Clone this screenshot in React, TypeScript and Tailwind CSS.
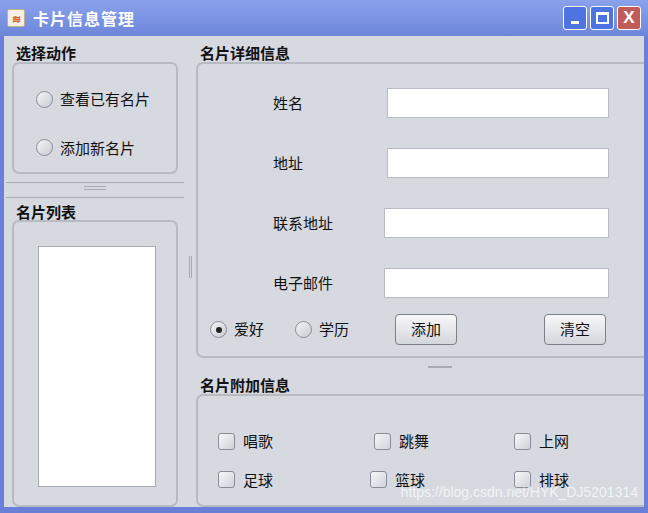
import React from "react";

const font = { fontFamily: '"SimSun","Noto Sans CJK SC",sans-serif' };

function Radio({ on, label }: { on?: boolean; label: string }) {
  return (
    <div className="flex items-center gap-[7px]">
      <span className="w-[17px] h-[17px] rounded-full border border-[#8a8d99] bg-gradient-to-br from-[#f4f4f6] to-[#c9ccd4] flex items-center justify-center">
        {on && <span className="w-[6px] h-[6px] rounded-full bg-[#222]" />}
      </span>
      <span>{label}</span>
    </div>
  );
}

function Check({ label }: { label: string }) {
  return (
    <div className="flex items-center gap-[8px]">
      <span className="w-[17px] h-[17px] rounded-[3px] border border-[#8a8d99] bg-gradient-to-br from-[#f7f7f9] to-[#d0d2da]" />
      <span>{label}</span>
    </div>
  );
}

function Field({ label, x }: { label: string; x: number }) {
  return (
    <div className="flex items-center h-[30px]">
      <span
        className="pl-[75px] shrink-0 whitespace-nowrap"
        style={{ width: x ? 186 : 189 }}
      >
        {label}
      </span>
      <div
        className="h-[30px] bg-white border border-[#b9bcc4]"
        style={{ width: x ? 225 : 222 }}
      />
    </div>
  );
}

function Btn({ label }: { label: string }) {
  return (
    <div className="w-[62px] h-[31px] rounded-[4px] border border-[#7d808a] bg-gradient-to-b from-[#f8f8fa] to-[#d4d6dd] flex items-center justify-center">
      {label}
    </div>
  );
}

export default function App() {
  return (
    <div
      className="w-[648px] h-[513px] bg-[#6a7fd8] flex flex-col text-[15px] text-[#111] overflow-hidden"
      style={font}
    >
      <div className="h-[36px] bg-gradient-to-b from-[#8aa2ec] to-[#6e86da] flex items-center px-[7px]">
        <div className="w-[18px] h-[18px] rounded-[2px] bg-[#f5f0e6] border border-[#c0b090] flex items-center justify-center text-[11px] text-[#d25a1a] font-bold">
          ≋
        </div>
        <span className="ml-[8px] text-white font-bold text-[16px] tracking-[1px]">卡片信息管理</span>
        <div className="ml-auto flex gap-[3px]">
          <div className="w-[24px] h-[24px] rounded-[3px] bg-[#4d74e0] border border-white flex items-end justify-center pb-[5px]">
            <span className="w-[8px] h-[3px] bg-white" />
          </div>
          <div className="w-[24px] h-[24px] rounded-[3px] bg-[#4d74e0] border border-white flex items-center justify-center">
            <span className="w-[13px] h-[12px] border-2 border-white border-t-[3px]" />
          </div>
          <div className="w-[24px] h-[24px] rounded-[3px] bg-[#c25a5a] border border-white flex items-center justify-center text-white font-bold text-[17px]" style={{ fontFamily: '"Liberation Sans",sans-serif' }}>
            X
          </div>
        </div>
      </div>
      <div className="flex-1 mx-[4px] mb-[6px] bg-[#d7d9e0] flex">
        {/* left */}
        <div className="w-[180px] flex flex-col pl-[2px]">
          <div className="h-[26px] pl-[10px] pt-[6px] font-bold">选择动作</div>
          <div className="ml-[6px] w-[166px] h-[112px] border-2 border-[#b8bac2] rounded-[7px] flex flex-col pl-[22px] pt-[24px] gap-[26px]">
            <Radio label="查看已有名片" />
            <Radio label="添加新名片" />
          </div>
          <div className="mt-[8px] h-[16px] border-y border-[#a8aab2] flex justify-center">
            <span className="w-[22px] h-[4px] mt-[3px] border-y border-[#a8aab2]" />
          </div>
          <div className="h-[22px] pl-[10px] pt-[3px] font-bold">名片列表</div>
          <div className="ml-[6px] w-[166px] flex-1 border-2 border-[#b8bac2] rounded-[7px] px-[24px] pt-[24px] pb-[18px]">
            <div className="w-[118px] h-full bg-white border border-[#a8aab2]" />
          </div>
        </div>
        {/* splitter */}
        <div className="w-[12px] flex items-center justify-center">
          <span className="w-[3px] h-[22px] border-x border-[#a8aab2] mb-[10px]" />
        </div>
        {/* right */}
        <div className="flex-1 flex flex-col">
          <div className="h-[26px] pl-[4px] pt-[6px] font-bold">名片详细信息</div>
          <div className="h-[296px] border-2 border-r-0 border-[#b8bac2] rounded-l-[7px] flex flex-col pt-[24px]">
            <div className="flex flex-col gap-[30px]">
              <Field label="姓名" x={0} />
              <Field label="地址" x={0} />
              <Field label="联系地址" x={1} />
              <Field label="电子邮件" x={1} />
            </div>
            <div className="flex items-center mt-[16px] pl-[12px]">
              <Radio on label="爱好" />
              <span className="w-[31px]" />
              <Radio label="学历" />
              <span className="w-[46px]" />
              <Btn label="添加" />
              <span className="w-[87px]" />
              <Btn label="清空" />
            </div>
          </div>
          <div className="h-[14px] flex justify-center">
            <span className="w-[24px] h-[2px] mt-[8px] bg-[#a8aab2] ml-[40px]" />
          </div>
          <div className="h-[22px] pl-[4px] pt-[2px] font-bold">名片附加信息</div>
          <div className="flex-1 border-2 border-r-0 border-[#b8bac2] rounded-l-[7px] pl-[20px] pt-[34px] grid grid-cols-[156px_140px_100px] gap-y-[16px] content-start relative">
            <Check label="唱歌" />
            <Check label="跳舞" />
            <Check label="上网" />
            <Check label="足球" />
            <div className="-ml-[4px]"><Check label="篮球" /></div>
            <Check label="排球" />
            <span className="absolute right-[6px] bottom-[2px] text-[14px] text-[#f2f3f6]" style={{ fontFamily: '"Liberation Sans",sans-serif' }}>
              https://blog.csdn.net/HYK_DJ5201314
            </span>
          </div>
        </div>
      </div>
    </div>
  );
}
